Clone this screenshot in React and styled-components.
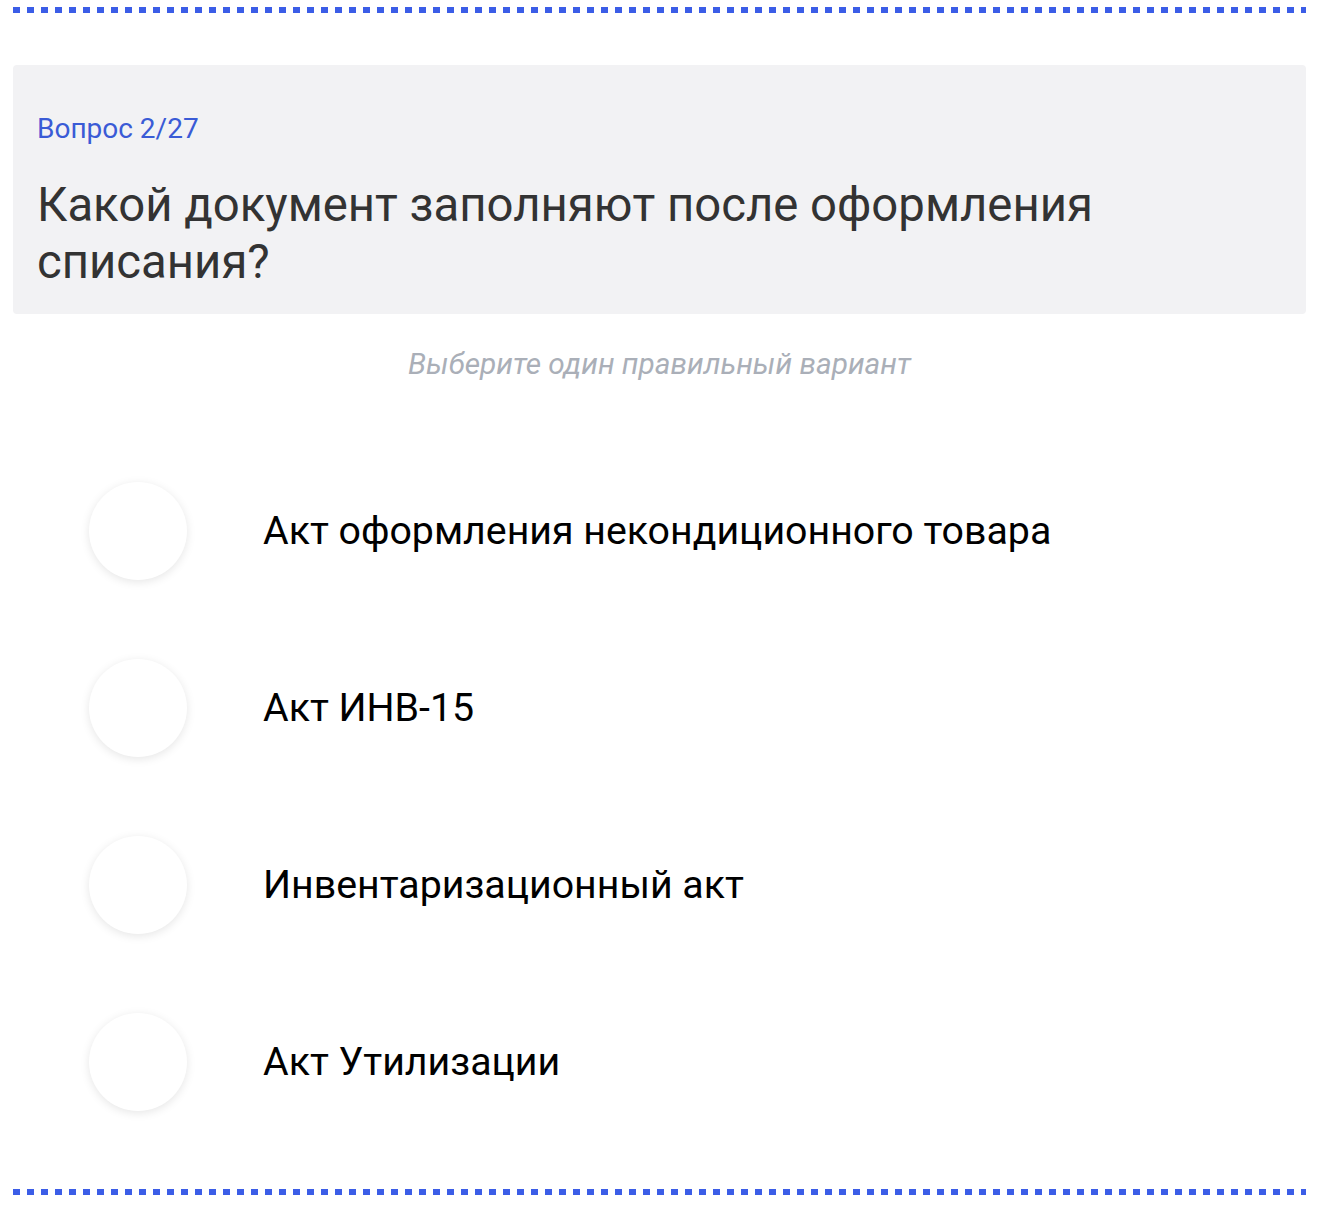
import styled, { createGlobalStyle } from "styled-components"

const Global = createGlobalStyle`
  body {
    margin: 0;
    background: #fff;
    font-family: Roboto, "Noto Sans", sans-serif;
  }
`

const options = [
  "Акт оформления некондиционного товара",
  "Акт ИНВ-15",
  "Инвентаризационный акт",
  "Акт Утилизации",
]

export default function App() {
  return (
    <>
      <Global />
      <Page>
        <Dots />
        <Card>
          <Counter>Вопрос 2/27</Counter>
          <Question>Какой документ заполняют после оформления списания?</Question>
        </Card>
        <Hint>Выберите один правильный вариант</Hint>
        <Options>
          {options.map((o) => (
            <Option key={o}>
              <Radio />
              <OptionText>{o}</OptionText>
            </Option>
          ))}
        </Options>
        <Dots />
      </Page>
    </>
  )
}

const Page = styled.div`
  width: 1293px;
  padding: 7px 14px 0 13px;
  display: flex;
  flex-direction: column;
`

const Dots = styled.div`
  height: 6px;
  width: 100%;
  background: repeating-linear-gradient(
    to right,
    #3b5de7 0,
    #3b5de7 7px,
    transparent 7px,
    transparent 14px
  );
`

const Card = styled.div`
  margin-top: 52px;
  background: #f2f2f4;
  border-radius: 4px;
  padding: 47px 24px 23px;
  display: flex;
  flex-direction: column;
  gap: 31px;
`

const Counter = styled.div`
  color: #3a5bd6;
  font-size: 28px;
  line-height: 34px;
`

const Question = styled.div`
  color: #333;
  font-size: 47.3px;
  line-height: 57px;
  max-width: 1150px;
`

const Hint = styled.div`
  margin-top: 33px;
  text-align: center;
  font-style: italic;
  color: #aaafb8;
  font-size: 29.8px;
  line-height: 34px;
`

const Options = styled.div`
  margin-top: 101px;
  display: flex;
  flex-direction: column;
  gap: 79px;
  padding-left: 76px;
  margin-bottom: 78px;
`

const Option = styled.div`
  display: flex;
  align-items: center;
  gap: 76px;
`

const Radio = styled.div`
  width: 98px;
  height: 98px;
  border-radius: 50%;
  background: #fff;
  box-shadow: 0 2px 10px rgba(0, 0, 0, 0.1);
  flex-shrink: 0;
`

const OptionText = styled.div`
  font-size: 39.3px;
  color: #000;
`
